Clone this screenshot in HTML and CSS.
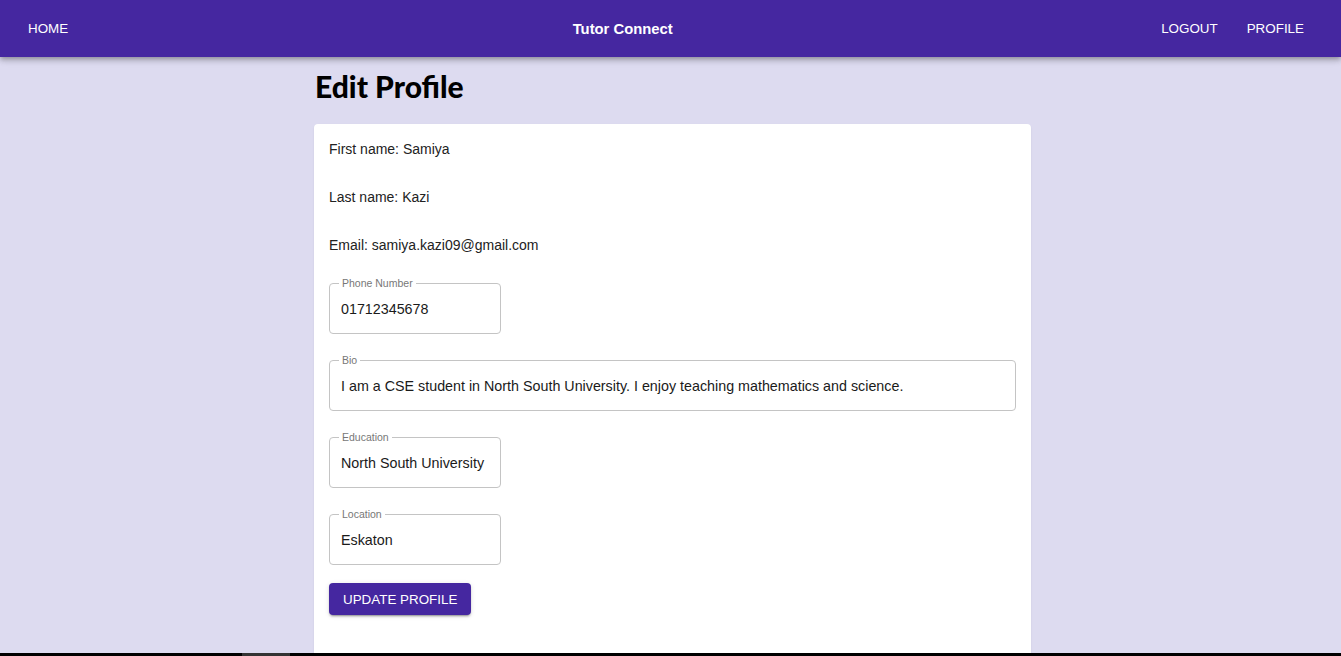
FILE: index.html
```html
<!DOCTYPE html>
<html>
<head>
<meta charset="utf-8">
<link rel="stylesheet" href="styles.css">
</head>
<body>
<header class="appbar">
  <a class="nav-btn" href="#">Home</a>
  <div class="brand">Tutor Connect</div>
  <nav class="nav-right">
    <a class="nav-btn" href="#">Logout</a>
    <a class="nav-btn" href="#">Profile</a>
  </nav>
</header>
<main class="page">
  <h1 class="title">Edit Profile</h1>
  <section class="card">
    <p class="info">First name: Samiya</p>
    <p class="info">Last name: Kazi</p>
    <p class="info">Email: samiya.kazi09@gmail.com</p>
    <form class="form">
      <div class="field short">
        <label>Phone Number</label>
        <input type="text" value="01712345678">
      </div>
      <div class="field wide">
        <label>Bio</label>
        <input type="text" value="I am a CSE student in North South University. I enjoy teaching mathematics and science.">
      </div>
      <div class="field short">
        <label>Education</label>
        <input type="text" value="North South University">
      </div>
      <div class="field short">
        <label>Location</label>
        <input type="text" value="Eskaton">
      </div>
      <button type="button" class="submit">Update Profile</button>
    </form>
  </section>
</main>
<div class="bottom-bar"><span class="thumb"></span></div>
</body>
</html>
```
FILE: styles.css
```css
html, body {
  margin: 0;
  padding: 0;
  height: 100%;
  overflow: hidden;
}
body {
  background: #dddbf0;
  font-family: "Liberation Sans", Arial, sans-serif;
  color: #1a1a1a;
}
.appbar {
  height: 57px;
  background: #4527a0;
  color: #fff;
  display: flex;
  align-items: center;
  justify-content: space-between;
  padding: 0 29px 0 20px;
  box-shadow: 0 2px 4px -1px rgba(0,0,0,0.2), 0 4px 5px 0 rgba(0,0,0,0.14), 0 1px 10px 0 rgba(0,0,0,0.12);
  position: relative;
  z-index: 2;
}
.nav-btn {
  color: #fff;
  text-decoration: none;
  text-transform: uppercase;
  font-size: 13.4px;
  padding: 6px 8px;
  line-height: 20px;
}
.brand {
  font-weight: bold;
  font-size: 14.8px;
  margin-left: 16px;
}
.nav-right {
  display: flex;
  gap: 13px;
}
.page {
  width: 717px;
  margin: 0 auto;
  padding-left: 4px;
}
.title {
  font-family: Lato, "Open Sans", sans-serif;
  font-weight: 900;
  font-size: 30px;
  margin: 12px 0 20px 1px;
  line-height: 35px;
  color: #000;
}
.card {
  background: #fff;
  border-radius: 4px;
  padding: 15px 15px 40px;
  min-height: 600px;
  box-shadow: 0 1px 2px rgba(0,0,0,0.08);
}
.info {
  margin: 0 0 28px;
  font-size: 14px;
  line-height: 20px;
  color: #222;
}
.form {
  display: flex;
  flex-direction: column;
  align-items: flex-start;
}
.field {
  margin: 0 0 26px;
  border: 1px solid #c4c4c4;
  border-radius: 4px;
  padding: 0 11px;
  height: 51px;
  box-sizing: border-box;
  position: relative;
  display: flex;
  align-items: center;
}
.field.short { width: 172px; }
.field.wide { width: 687px; }
.field label {
  position: absolute;
  top: -7px;
  left: 9px;
  font-size: 10.5px;
  color: #777;
  padding: 0 3px;
  line-height: 12px;
  background: #fff;
}
.field input {
  border: none;
  outline: none;
  font-family: "Liberation Sans", Arial, sans-serif;
  font-size: 14.3px;
  color: #1a1a1a;
  padding: 0;
  width: 100%;
  background: transparent;
}
.submit {
  margin-top: -8px;
  background: #4527a0;
  color: #fff;
  border: none;
  border-radius: 4px;
  text-transform: uppercase;
  font-family: "Liberation Sans", Arial, sans-serif;
  font-size: 13.4px;
  height: 32px;
  padding: 0 14px;
  box-shadow: 0 3px 1px -2px rgba(0,0,0,0.2), 0 2px 2px 0 rgba(0,0,0,0.14), 0 1px 5px 0 rgba(0,0,0,0.12);
}
.bottom-bar {
  position: fixed;
  left: 0;
  right: 0;
  bottom: 0;
  height: 3px;
  background: #000;
}
.bottom-bar .thumb {
  position: absolute;
  left: 242px;
  width: 48px;
  top: 0;
  height: 3px;
  background: #333;
}
```
